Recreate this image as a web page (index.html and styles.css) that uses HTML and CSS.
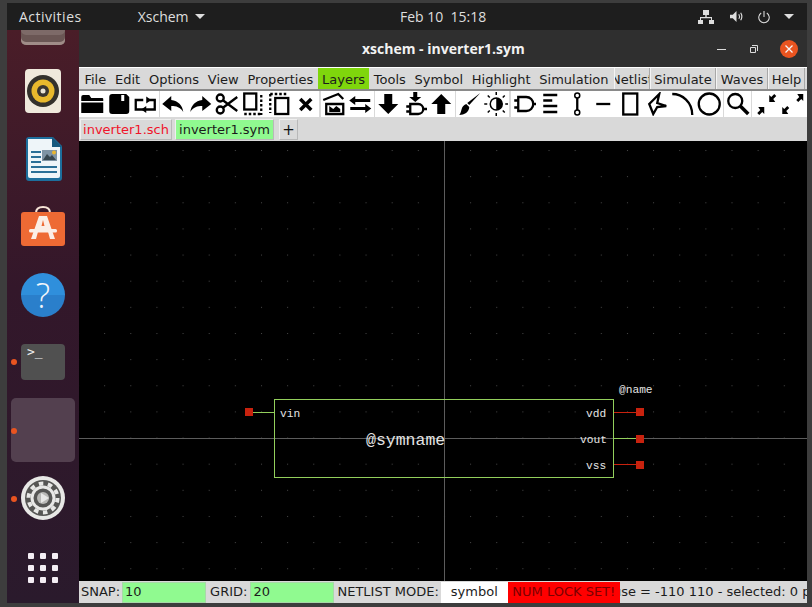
FILE: index.html
```html
<!DOCTYPE html>
<html lang="en">

<head>
    <meta charset="UTF-8">
    <title>xschem - inverter1.sym</title>
    <link rel="stylesheet" href="styles.css">
</head>

<body>
    <div class="screen">
        <div class="topbar">
            <span class="activities">Activities</span>
            <span class="appmenu">Xschem<i class="caret"></i></span>
            <span class="clock">Feb 10&nbsp; 15:18</span>
            <div class="tray">
                <svg class="tray-net" viewBox="0 0 16 14"><path d="M5 0h6v5H8.7v2H14v3h2v4h-5v-4h2V8.200H3V10h2v4H0v-4h2V7h5.300V5H5z"/></svg>
                <svg class="tray-snd" viewBox="0 0 16 14"><path d="M1 5h3l4-4v12L4 9H1z"/><path class="thin" d="M10.500 4.500q1.500 2.500 0 5M12.500 3q2.500 4 0 8"/></svg>
                <svg class="tray-pow" viewBox="0 0 16 16"><path class="thin" d="M8 1v7M4.800 3.500a6 6 0 1 0 6.400 0"/></svg>
                <i class="caret tray-caret"></i>
            </div>
        </div>

        <div class="main">
            <div class="dock">
                <div class="dock-top"></div>
                <svg class="dock-icon speaker" viewBox="0 0 36 44">
                    <rect width="36" height="44" rx="4" fill="#efe9dc"/>
                    <circle cx="18" cy="22" r="16" fill="#33312c"/>
                    <circle cx="18" cy="22" r="11.500" fill="#e8b92d"/>
                    <circle cx="18" cy="22" r="6" fill="#3a3630"/>
                    <circle cx="18" cy="22" r="2.500" fill="#e9e4d6"/>
                </svg>
                <svg class="dock-icon writer" viewBox="0 0 37 44">
                    <path d="M1 3q0-3 3-3h24l9 9v32q0 3-3 3H4q-3 0-3-3z" fill="#1d6f9d"/>
                    <path d="M3 2h24l8 8v29q0 2-2 2H5q-2 0-2-2z" fill="#eef5f9"/>
                    <path d="M27 0l10 10h-10z" fill="#16597f"/>
                    <path d="M6 14h10v2H6zM6 19h10v2H6zM6 24h10v2H6zM6 29h26v2H6zM6 34h26v2H6z" fill="#2a6f97"/>
                    <rect x="17" y="13" width="15" height="11" fill="#7e93a3"/>
                    <path d="M18 23l4-6 3 3 2-2 4 5z" fill="#37474f"/>
                    <circle cx="29" cy="15.500" r="2" fill="#e9b72f"/>
                </svg>
                <svg class="dock-icon store" viewBox="0 0 44 40">
                    <path class="bag-handle" d="M15 7q0-6 7-6t7 6"/>
                    <rect y="6" width="44" height="34" rx="3" fill="#ee6a34"/>
                    <path d="M18 10h8l8 23h-5l-2.500-9h-9L15 33h-5zM20.500 20h3L22 14z" fill="#fbeee6" fill-rule="evenodd"/>
                    <rect x="8" y="23" width="28" height="3.500" rx="1.500" fill="#fbeee6"/>
                </svg>
                <div class="dock-help">?</div>
                <div class="dock-term">&gt;_</div>
                <div class="dock-active"></div>
                <svg class="dock-icon gear" viewBox="0 0 44 44">
                    <circle cx="22" cy="22" r="22" fill="#e8e8e6"/>
                    <circle cx="22" cy="22" r="18" fill="#565654"/>
                    <circle cx="22" cy="22" r="11" fill="none" stroke="#e8e8e6" stroke-width="3"/>
                    <circle cx="22" cy="22" r="14.500" fill="none" stroke="#e8e8e6" stroke-width="4" stroke-dasharray="4.500 4.600"/>
                    <circle cx="22" cy="22" r="6" fill="#b9b9b6"/>
                    <path d="M20 17l8 5-8 5z" fill="#e8e8e6"/>
                </svg>
                <div class="dock-apps">
                    <i></i><i></i><i></i><i></i><i></i><i></i><i></i><i></i><i></i>
                </div>
                <i class="run-dot dot-term"></i>
                <i class="run-dot dot-active"></i>
                <i class="run-dot dot-gear"></i>
            </div>

            <div class="window">
                <div class="titlebar">
                    <span class="title">xschem - inverter1.sym</span>
                    <i class="win-min"></i>
                    <svg class="win-max" viewBox="0 0 8 8"><path d="M2 .5h5.500V6M.5 2.500h5v5h-5z"/></svg>
                    <span class="win-close">
                        <svg viewBox="0 0 10 10"><path d="M1.500 1.500l7 7M8.500 1.500l-7 7"/></svg>
                    </span>
                </div>

                <div class="menubar">
                    <span class="menu">File</span>
                    <span class="menu">Edit</span>
                    <span class="menu">Options</span>
                    <span class="menu">View</span>
                    <span class="menu">Properties</span>
                    <span class="menu layers">Layers</span>
                    <span class="menu">Tools</span>
                    <span class="menu">Symbol</span>
                    <span class="menu">Highlight</span>
                    <span class="menu">Simulation</span>
                    <span class="menubtn netlist"><span>Netlist</span></span>
                    <span class="menubtn simulate">Simulate</span>
                    <span class="menubtn waves">Waves</span>
                    <span class="menubtn help">Help</span>
                </div>

                <div class="toolbar">
                    <div class="tgroup">
                        <svg class="tool" viewBox="0 0 24 24"><path d="M1 5q0-2 2-2h6l2 3h11q1 0 1 1v2H1zM1 10.500h22V21H1z"/></svg>
                        <svg class="tool" viewBox="0 0 24 24"><path d="M2 5q0-3 3-3h14l3 3v14q0 3-3 3H5q-3 0-3-3zM14 3v6h3V3z" fill-rule="evenodd"/></svg>
                        <svg class="tool" viewBox="0 0 24 24"><path class="st" d="M10 8H2.500v9.500h19V8H16"/><path d="M13 4.500l5 3.500-5 3.500zM13 14l-5 3.500 5 3.500z"/></svg>
                    </div>
                    <div class="tgroup">
                        <svg class="tool" viewBox="0 0 24 24"><path d="M10 4L1 12l9 7v-5c5 0 9 1 12 6-1-7-5-11-12-12z"/></svg>
                        <svg class="tool" viewBox="0 0 24 24"><path d="M14 4l9 8-9 7v-5c-5 0-9 1-12 6 1-7 5-11 12-12z"/></svg>
                        <svg class="tool" viewBox="0 0 24 24"><circle class="st" cx="6" cy="6" r="3.500"/><circle class="st" cx="6" cy="18" r="3.500"/><path class="st" d="M9 8.500L23 19M9 15.500L23 5"/></svg>
                        <svg class="tool" viewBox="0 0 24 24"><rect class="st" x="3" y="1.500" width="12" height="16"/><path class="st dash" d="M20 3v20M3 22h17"/></svg>
                        <svg class="tool" viewBox="0 0 24 24"><rect class="st" x="8" y="6" width="13" height="16"/><path class="st dash" d="M3 2v19M3 2h17"/></svg>
                        <svg class="tool" viewBox="0 0 24 24"><path class="st fat" d="M6 7l11 11M17 7L6 18"/></svg>
                    </div>
                    <div class="tgroup">
                        <svg class="tool" viewBox="0 0 24 24"><path class="st" d="M4 12h17v10H4z"/><path class="st" d="M1 8L16 2l5 5"/><path d="M7 14l4 3 3-3 4 3v3H7z"/></svg>
                        <svg class="tool" viewBox="0 0 24 24"><path d="M7 4v3h15v3H7v3L1 8.500zM17 12v3H2v3h15v3l6-4.500z"/></svg>
                    </div>
                    <div class="tgroup">
                        <svg class="tool" viewBox="0 0 24 24"><path d="M8 2h8v10h6L12 22 2 12h6z"/></svg>
                        <svg class="tool" viewBox="0 0 24 24"><path d="M10 0h4v5h4l-6 5-6-5h4z"/><path class="st" d="M7 12h8a5 5 0 0 1 0 10H7zM3 14.500h4M3 19.500h4M20 17h4"/></svg>
                        <svg class="tool" viewBox="0 0 24 24"><path d="M12 2l10 10h-6v10H8V12H2z"/></svg>
                    </div>
                    <div class="tgroup">
                        <svg class="tool" viewBox="0 0 24 24"><path d="M23 1L12 13l-2-2z"/><path d="M9 12l3 3c0 5-5 8-10 8 3-3 1-9 7-11z"/></svg>
                        <svg class="tool" viewBox="0 0 24 24"><circle class="st thinner" cx="12" cy="12" r="6"/><path d="M12 6a6 6 0 0 1 0 12z"/><path class="st thinner" d="M12 0v3M12 21v3M0 12h3M21 12h3M3.500 3.500l2 2M18.500 18.500l2 2M20.500 3.500l-2 2M5.500 18.500l-2 2"/></svg>
                    </div>
                    <div class="tgroup">
                        <svg class="tool" viewBox="0 0 24 24"><path class="st" d="M6 5h8a7 7 0 0 1 0 14H6zM2 8.500h4M2 15.500h4M21 12h3"/></svg>
                        <svg class="tool" viewBox="0 0 24 24"><path class="st" d="M5 3h14M5 8.500h9M5 14h14M5 20h14"/></svg>
                        <svg class="tool" viewBox="0 0 24 24"><circle class="st thinner" cx="12" cy="3.500" r="2.500"/><circle class="st thinner" cx="12" cy="20.500" r="2.500"/><path class="st" d="M12 6v12"/></svg>
                        <svg class="tool" viewBox="0 0 24 24"><path class="st" d="M5 12h14"/></svg>
                        <svg class="tool" viewBox="0 0 24 24"><rect class="st" x="5" y="1.500" width="14" height="21"/></svg>
                        <svg class="tool" viewBox="0 0 24 24"><path class="st" d="M15 2l-10 10 4 10 4-7 9-1-9-3z"/></svg>
                        <svg class="tool" viewBox="0 0 24 24"><path class="st" d="M1 2c10 0 20 8 20 21"/></svg>
                        <svg class="tool" viewBox="0 0 24 24"><circle class="st" cx="12" cy="12" r="10.500"/></svg>
                    </div>
                    <div class="tgroup">
                        <svg class="tool" viewBox="0 0 24 24"><circle class="st" cx="10" cy="9" r="7"/><path class="st fat" d="M15 14l8 8"/></svg>
                    </div>
                    <div class="tgroup last">
                        <svg class="tool" viewBox="0 0 24 24"><path d="M11 15v7l-2-2-3 3-2-2 3-3-2-3zM16 10V3l2 2 3-3 2 2-3 3 2 3z"/></svg>
                        <svg class="tool" viewBox="0 0 24 24"><path d="M2 22v-7l2 2 3-3 2 2-3 3 2 3zM23 2v7l-2-2-3 3-2-2 3-3-2-3z"/></svg>
                    </div>
                </div>

                <div class="tabs">
                    <span class="tab tab-sch">inverter1.sch</span>
                    <span class="tab tab-sym">inverter1.sym</span>
                    <span class="tab tab-add">+</span>
                </div>

                <svg class="canvas" viewBox="0 0 728 440">
                    <defs>
                        <pattern id="griddots" width="26.14" height="26.14" patternUnits="userSpaceOnUse" x="-1" y="9">
                            <rect class="griddot" width="1" height="1"/>
                        </pattern>
                    </defs>
                    <rect width="728" height="440" fill="url(#griddots)"/>
                    <path class="axis" d="M0 297.500h728M365.500 0v440"/>
                    <rect class="box" x="195.500" y="258.500" width="339" height="78"/>
                    <path class="wire-green" d="M169 271.500h26M535 297.500h26"/>
                    <path class="wire-red" d="M535 271.500h26M535 323.500h26"/>
                    <rect class="pin" x="166" y="267" width="8" height="8"/>
                    <rect class="pin" x="557" y="267" width="8" height="8"/>
                    <rect class="pin" x="557" y="294" width="8" height="8"/>
                    <rect class="pin" x="557" y="320" width="8" height="8"/>
                    <text class="lbl" x="201" y="276">vin</text>
                    <text class="lbl" x="507" y="276">vdd</text>
                    <text class="lbl" x="501" y="302">vout</text>
                    <text class="lbl" x="507" y="328">vss</text>
                    <text class="lbl" x="540" y="252">@name</text>
                    <text class="lbl big" x="287" y="304">@symname</text>
                </svg>

                <div class="statusbar">
                    <span class="slabel">SNAP:</span>
                    <span class="sinput snap">10</span>
                    <span class="slabel">GRID:</span>
                    <span class="sinput grid">20</span>
                    <span class="slabel">NETLIST MODE:</span>
                    <span class="smode">symbol</span>
                    <span class="snum">NUM LOCK SET!</span>
                    <span class="smsg"><span>mouse = -110 110 - selected: 0 path</span></span>
                </div>
            </div>
        </div>
    </div>
</body>

</html>
```

FILE: styles.css
```css
* {
    padding: 0;
    margin: 0;
    box-sizing: border-box;
}

body {
    background-color: #3c3c3c;
    overflow: hidden;
}

.screen {
    width: 812px;
    height: 607px;
    padding: 3px 5px 4px 7px;
    display: flex;
    flex-direction: column;
    background-color: #3d3d3d;
}

/* top panel */
.topbar {
    height: 27px;
    flex: none;
    display: flex;
    align-items: center;
    position: relative;
    background-color: #1e1e1e;
    color: #dedede;
    font: 14px "Open Sans", "Noto Sans", sans-serif;
}

.activities {
    margin-left: 12px;
    letter-spacing: .5px;
}

.appmenu {
    margin-left: 56px;
    display: flex;
    align-items: center;
}

.caret {
    display: block;
    width: 0;
    height: 0;
    margin-left: 6px;
    border-left: 5px solid transparent;
    border-right: 5px solid transparent;
    border-top: 5px solid #dedede;
}

.clock {
    position: absolute;
    left: 393px;
}

.tray {
    margin-left: auto;
    margin-right: 13px;
    display: flex;
    align-items: center;
}

.tray svg {
    fill: #dedede;
}

.tray .thin {
    fill: none;
    stroke: #dedede;
    stroke-width: 1.2;
}

.tray-net {
    width: 16px;
    height: 14px;
}

.tray-snd {
    width: 15px;
    height: 13px;
    margin-left: 15px;
}

.tray-pow {
    width: 14px;
    height: 14px;
    margin-left: 13px;
}

.tray-caret {
    margin-left: 13px;
}

.main {
    flex: 1;
    min-height: 0;
    display: flex;
}

/* launcher */
.dock {
    width: 72px;
    flex: none;
    position: relative;
    display: flex;
    flex-direction: column;
    align-items: center;
    overflow: hidden;
    background: linear-gradient(#4a1d28, #33172a 45%, #2a1a2c);
}

.dock-top {
    width: 44px;
    height: 44px;
    flex: none;
    margin-top: -29px;
    border-radius: 5px;
    background-color: #7d6a68;
    box-shadow: inset 0 -3px 0 #a08c88, inset 0 -10px 0 #6a5654;
}

.dock-icon {
    display: block;
    flex: none;
}

.speaker {
    width: 36px;
    height: 44px;
    margin-top: 24px;
}

.writer {
    width: 37px;
    height: 44px;
    margin-top: 24px;
}

.store {
    width: 44px;
    height: 40px;
    margin-top: 25px;
}

.bag-handle {
    fill: none;
    stroke: #f6e3d6;
    stroke-width: 2;
}

.dock-help {
    width: 44px;
    height: 44px;
    flex: none;
    margin-top: 27px;
    border-radius: 50%;
    background: linear-gradient(#2f8fdc 50%, #2a7fcb 50%);
    color: #f2f6fa;
    font: 300 34px/44px "Open Sans", sans-serif;
    text-align: center;
}

.dock-term {
    width: 44px;
    height: 36px;
    flex: none;
    margin-top: 27px;
    padding-left: 6px;
    border-radius: 4px;
    background-color: #505050;
    color: #f0f0f0;
    font: 13px/15px "DejaVu Sans Mono", monospace;
}

.dock-active {
    width: 64px;
    height: 64px;
    flex: none;
    margin-top: 18px;
    border-radius: 5px;
    background-color: #53404f;
}

.gear {
    width: 44px;
    height: 44px;
    margin-top: 14px;
}

.dock-apps {
    width: 30px;
    flex: none;
    margin-top: 33px;
    display: grid;
    grid-template-columns: repeat(3, 6px);
    grid-auto-rows: 6px;
    justify-content: space-between;
    row-gap: 6px;
}

.dock-apps i {
    border-radius: 1px;
    background-color: #f4eef4;
}

.run-dot {
    position: absolute;
    left: 4px;
    width: 6px;
    height: 6px;
    border-radius: 50%;
    background-color: #e95420;
}

.dot-term {
    top: 329px;
}

.dot-active {
    top: 398px;
}

.dot-gear {
    top: 466px;
}

/* xschem window */
.window {
    flex: 1;
    min-width: 0;
    display: flex;
    flex-direction: column;
    font-family: "DejaVu Sans", sans-serif;
    background-color: #d9d9d9;
}

.titlebar {
    height: 37px;
    flex: none;
    position: relative;
    display: flex;
    align-items: center;
    justify-content: flex-end;
    background-color: #2f2f2f;
}

.title {
    position: absolute;
    left: 283px;
    color: #f2f2f2;
    font: bold 14px "Open Sans", sans-serif;
}

.win-min {
    width: 9px;
    height: 1px;
    margin-top: 2px;
    background-color: #dcdcdc;
}

.win-max {
    width: 8px;
    height: 8px;
    margin-left: 24px;
    fill: none;
    stroke: #dcdcdc;
}

.win-close {
    width: 18px;
    height: 18px;
    margin: 0 9px 0 22px;
    display: flex;
    align-items: center;
    justify-content: center;
    border-radius: 50%;
    background-color: #e95420;
}

.win-close svg {
    width: 10px;
    height: 10px;
    fill: none;
    stroke: #f6f6f6;
    stroke-width: 1.300;
}

.menubar {
    height: 24px;
    flex: none;
    padding: 0 2px 0 1px;
    display: flex;
    align-items: stretch;
    border-top: 1px solid #fff;
    border-bottom: 2px solid #8a8a8a;
    color: #1c1c1c;
    font-size: 13px;
    line-height: 23px;
}

.menu {
    padding: 0 4.400px;
    white-space: nowrap;
}

.layers {
    background-color: #7fd60c;
}

.menubtn {
    flex: none;
    border-left: 1px solid #f4f4f4;
    border-right: 1px solid #a8a8a8;
    text-align: center;
    white-space: nowrap;
    overflow: hidden;
}

.netlist {
    margin-left: auto;
    width: 36px;
    display: flex;
    justify-content: center;
}

.simulate {
    width: 66px;
}

.waves {
    width: 52px;
}

.help {
    width: 37px;
}

.toolbar {
    height: 26px;
    flex: none;
    display: flex;
    gap: 1.500px;
}

.tgroup {
    display: flex;
    background-color: #fff;
}

.tgroup.last {
    flex: 1;
}

.tool {
    width: 26.500px;
    height: 26px;
    flex: none;
    padding: 1px;
    fill: #000;
}

.tool .st {
    fill: none;
    stroke: #000;
    stroke-width: 2.300;
}

.tool .fat {
    stroke-width: 3.500;
}

.tool .thinner {
    stroke-width: 1.500;
}

.tool .dash {
    stroke-dasharray: 2.500 2;
}

.tabs {
    height: 24px;
    flex: none;
    padding: 2px 0 1px 1px;
    display: flex;
    align-items: stretch;
    font-size: 13px;
}

.tab {
    display: flex;
    align-items: center;
    justify-content: center;
    border: 1px solid #b8b8b8;
    border-top-color: #efefef;
    border-left-color: #efefef;
    white-space: nowrap;
}

.tab-sch {
    width: 92px;
    color: #f0142a;
}

.tab-sym {
    width: 99px;
    margin-left: 3px;
    background-color: #90fa90;
    color: #1a1a1a;
}

.tab-add {
    width: 19px;
    margin-left: 5px;
    color: #111;
    font-size: 15px;
}

.canvas {
    display: block;
    width: 728px;
    height: 440px;
    flex: none;
    background-color: #000;
}

.griddot {
    fill: #484848;
}

.axis {
    stroke: #5c5c5c;
    stroke-width: 1;
}

.box {
    fill: none;
    stroke: #93cf5c;
    stroke-width: 1;
}

.wire-green {
    fill: none;
    stroke: #93cf5c;
}

.wire-red {
    fill: none;
    stroke: #c8220e;
}

.pin {
    fill: #c8220e;
}

.lbl {
    fill: #e4e4e4;
    font: 11.200px "Liberation Mono", monospace;
}

.lbl.big {
    font-size: 16.500px;
}

.statusbar {
    height: 22px;
    flex: none;
    padding: 1px 0 0 2px;
    display: flex;
    align-items: stretch;
    color: #1c1c1c;
    font-size: 13px;
    line-height: 20px;
    white-space: nowrap;
}

.sinput {
    padding-left: 2px;
    background-color: #90fa90;
    border: 1px solid #a8d8a8;
    line-height: 18px;
}

.snap {
    width: 84px;
    margin: 0 4px 0 2px;
}

.grid {
    width: 84px;
    margin: 0 3px;
}

.smode {
    width: 67px;
    margin-left: 2px;
    background-color: #fff;
    text-align: center;
}

.snum {
    width: 112px;
    background-color: #ff0000;
    color: #7a0000;
    text-align: center;
}

.smsg {
    flex: 1;
    min-width: 0;
    overflow: hidden;
}

.smsg span {
    display: block;
    margin-left: -27.500px;
}
```
